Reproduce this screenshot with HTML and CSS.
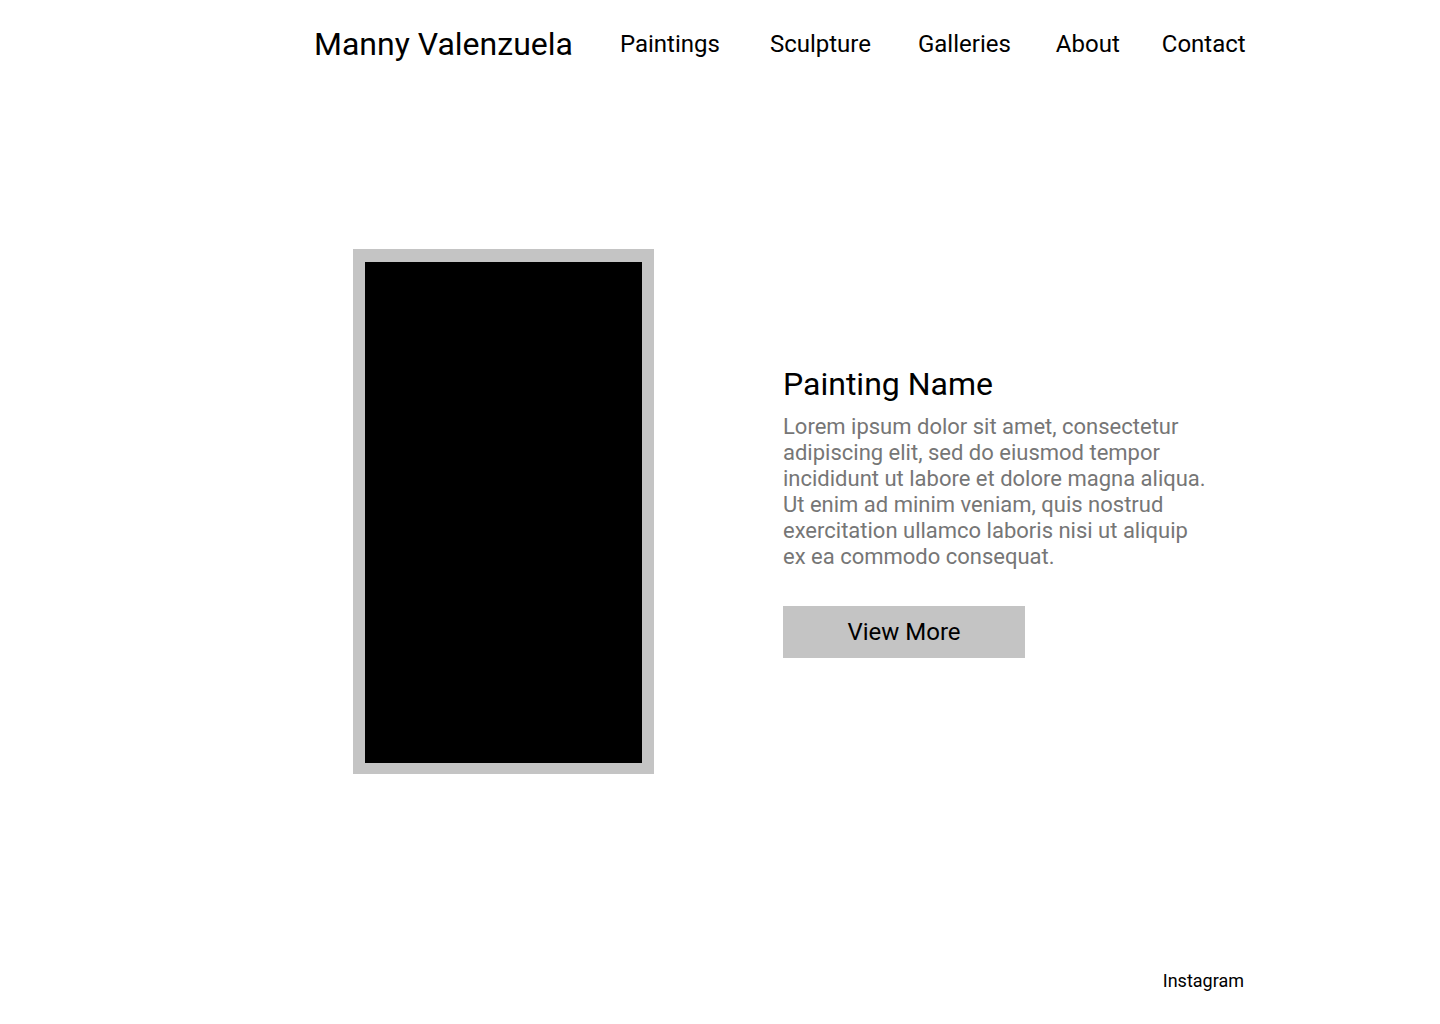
FILE: index.html
```html
<!DOCTYPE html>
<html lang="en">
<head>
<meta charset="utf-8">
<title>Manny Valenzuela</title>
<link rel="stylesheet" href="styles.css">
</head>
<body>
<div class="page">
  <header class="site-header">
    <div class="logo">Manny Valenzuela</div>
    <nav class="nav">
      <a class="nav-link nav-paintings" href="#">Paintings</a>
      <a class="nav-link nav-sculpture" href="#">Sculpture</a>
      <a class="nav-link nav-galleries" href="#">Galleries</a>
      <a class="nav-link nav-about" href="#">About</a>
      <a class="nav-link nav-contact" href="#">Contact</a>
    </nav>
  </header>
  <main class="feature">
    <div class="frame"><div class="canvas"></div></div>
    <div class="info">
      <h1 class="title">Painting Name</h1>
      <p class="desc">Lorem ipsum dolor sit amet, consectetur adipiscing elit, sed do eiusmod tempor incididunt ut labore et dolore magna aliqua. Ut enim ad minim veniam, quis nostrud exercitation ullamco laboris nisi ut aliquip ex ea commodo consequat.</p>
      <a class="button" href="#">View More</a>
    </div>
  </main>
  <footer class="site-footer">
    <a class="footer-link" href="#">Instagram</a>
  </footer>
</div>
</body>
</html>
```
FILE: styles.css
```css
html, body {
  margin: 0;
  padding: 0;
  background: #ffffff;
}
body {
  font-family: Roboto, "Liberation Sans", Arial, sans-serif;
  color: #000;
}
a {
  color: inherit;
  text-decoration: none;
}
.page {
  width: 1440px;
  min-height: 1024px;
  display: flex;
  flex-direction: column;
  box-sizing: border-box;
}
.site-header {
  display: flex;
  align-items: flex-start;
  padding: 25px 0 0 314px;
}
.logo {
  font-size: 32px;
  line-height: 38px;
  font-weight: 400;
}
.nav {
  display: flex;
  align-items: baseline;
  margin: 5px 0 0 47px;
}
.nav-link {
  font-size: 24px;
  line-height: 28px;
}
.nav-sculpture { margin-left: 50px; }
.nav-galleries { margin-left: 47px; }
.nav-about { margin-left: 45px; }
.nav-contact { margin-left: 42px; }

.feature {
  display: flex;
  align-items: center;
  padding: 186px 0 0 353px;
}
.frame {
  width: 301px;
  height: 525px;
  background: #c4c4c4;
  box-sizing: border-box;
  padding: 13px 12px 11px 12px;
}
.canvas {
  width: 100%;
  height: 100%;
  background: #000;
}
.info {
  margin-left: 129px;
  width: 428px;
}
.title {
  margin: 0;
  font-size: 32px;
  line-height: 36px;
  font-weight: 400;
}
.desc {
  margin: 12px 0 0 0;
  font-size: 22px;
  line-height: 26px;
  color: #767676;
}
.button {
  display: flex;
  align-items: center;
  justify-content: center;
  margin-top: 36px;
  width: 242px;
  height: 52px;
  background: #c4c4c4;
  font-size: 24px;
}
.site-footer {
  margin-top: auto;
  display: flex;
  justify-content: flex-end;
  padding: 0 196px 33px 0;
}
.footer-link {
  font-size: 18px;
  line-height: 21px;
}
```
